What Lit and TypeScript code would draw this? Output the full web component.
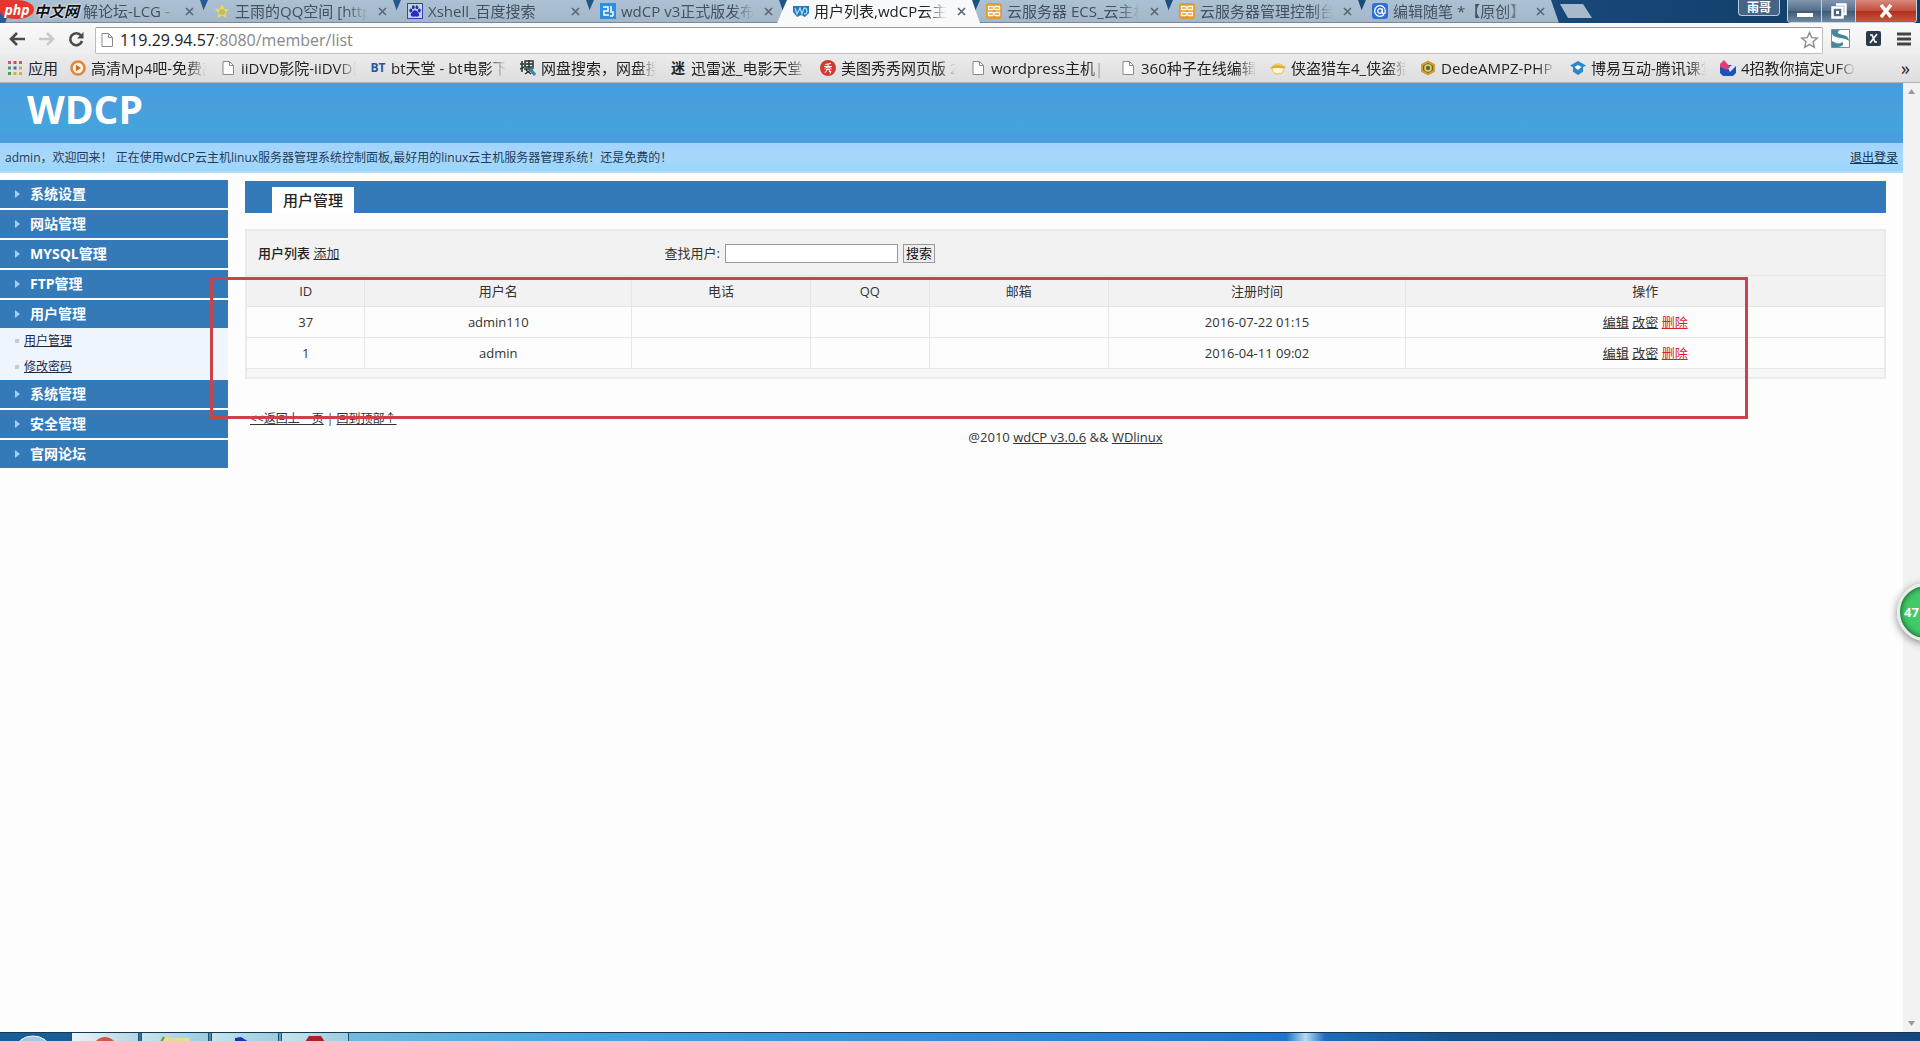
import { LitElement, html, css, svg } from "lit";
import { customElement } from "lit/decorators.js";
import { classMap } from "lit/directives/class-map.js";

const base = css`
  * { box-sizing: border-box; }
  button, input { font-family: inherit; }
  button { border: 0; padding: 0; margin: 0; background: none; color: inherit; }
  svg { display: block; flex: none; }
  ul { list-style: none; margin: 0; padding: 0; }
`;

const sheet = svg`<path d="M3 1.500h6.500l4 4v9h-10.500z" fill="#fdfdfd" stroke="#8a8a8a"/><path d="M9.500 1.500v4h4" fill="none" stroke="#8a8a8a"/>`;

const icons: Record<string, unknown> = {
  sheet,
  star: svg`<path d="M8 1l2.200 4.700 5 .6-3.700 3.500 1 5.200L8 12.400 3.500 15l1-5.200L.8 6.300l5-.6z" fill="#f0d45c"/><circle cx="8" cy="9" r="3" fill="#b8c070"/>`,
  paw: svg`<rect x=".5" y=".5" width="15" height="15" fill="#c3d3ea" stroke="#3343b0"/><ellipse cx="3.800" cy="7.500" rx="1.500" ry="2" fill="#2a2fb8"/><ellipse cx="6.300" cy="4.300" rx="1.400" ry="2" fill="#2a2fb8"/><ellipse cx="9.900" cy="4.300" rx="1.400" ry="2" fill="#2a2fb8"/><ellipse cx="12.300" cy="7.500" rx="1.500" ry="2" fill="#2a2fb8"/><path d="M8 7.300c2 0 4.200 3 4.200 4.700 0 2.200-2.700 1.600-4.200 1.600s-4.200.6-4.200-1.600C3.800 10.300 6 7.300 8 7.300z" fill="#2a2fb8"/>`,
  blog: svg`<rect width="16" height="16" fill="#2d8fe0"/><path d="M3 4h5v4H4v4h5M11 3v7M13 8v5M10 13h3" fill="none" stroke="#fff" stroke-width="1.500"/>`,
  wd: svg`<path d="M0 3h16v7l-4 4-4-2-4 2-4-5z" fill="#2379bd"/><path d="M2 5l2 6 3-6 2 6 2-6M11 5c4 0 4 6 0 6" fill="none" stroke="#9fd8f4" stroke-width="1.300"/>`,
  cloud: svg`<rect width="16" height="16" rx="3" fill="#e8992e"/><path d="M2.500 3.500h4l1.500 1 1.500-1h4v3h-4l-1.500-1-1.500 1h-4zM2.500 9.500h4l1.500 1 1.500-1h4v3h-4l-1.500-1-1.500 1h-4z" fill="none" stroke="#fff" stroke-width="1.300"/>`,
  pen: svg`<rect width="16" height="16" rx="3" fill="#2f6fd6"/><path d="M12 11.500A5.300 5.300 0 1 1 13.300 8v1.500c0 1.500-3 1.500-3 0V5.500" fill="none" stroke="#fff" stroke-width="1.300"/><circle cx="8" cy="8" r="2.300" fill="none" stroke="#fff" stroke-width="1.300"/>`,
  play: svg`<circle cx="8" cy="8" r="6.500" fill="#fdf1e2" stroke="#e0883a" stroke-width="2.600"/><path d="M6 4.800l5 3.200-5 3.200z" fill="#c86a20"/>`,
  orbit: svg`<path d="M2 1v11M0 4h4M0 9l4-2" fill="none" stroke="#25343a" stroke-width="1.500"/><rect x="5" y="1" width="8" height="6" fill="none" stroke="#25343a" stroke-width="1.500"/><path d="M9 0v8M5 4h8M4 9h8l-7 5M6 10l5 4" fill="none" stroke="#25343a" stroke-width="1.500"/><path d="M10 9l5 6" stroke="#2b8ba5" stroke-width="3"/>`,
  xiu: svg`<circle cx="8" cy="8" r="8" fill="#cf3b33"/><path d="M5 4.500l6-1M4 6.500h8M8 4v5M8 6.500L4.500 9M8 6.500L11.500 9M6 9.500h4l-1 2h2l-1 2M7 9.500L5 13" fill="none" stroke="#fff"/>`,
  thief: svg`<ellipse cx="8" cy="9" rx="6" ry="5" fill="#fdf8df" stroke="#e3bd3f"/><path d="M0 8c2-2 5-3 8-3s6 1 8 2c-2 2-4 1-8 1s-6 1-8 0z" fill="#e6ad2c"/>`,
  hex: svg`<path d="M8 .5l7 3.700v7.600l-7 3.700-7-3.700V4.200z" fill="#d39a32"/><path d="M8 3l5 2.700v4.600L8 13l-5-2.700V5.700z" fill="#566b2c"/><circle cx="8" cy="8" r="3" fill="none" stroke="#f4d47a" stroke-width="1.500"/>`,
  cap: svg`<path d="M8 1l8 4.500-3 1.700v4.500L8 15l-5-3.300V7.200L0 5.500z" fill="#2c86cf"/><path d="M4.500 7L8 5l3.500 2L8 10z" fill="#fff"/>`,
  ribbon: svg`<path d="M0 5h16v8l-3 3H3l-3-3z" fill="#1f52b8"/><path d="M8 8l8-6v4l-6 6z" fill="#dfe6f3"/><path d="M0 4l4-4 6 7-3 3-7-3z" fill="#df3f78"/>`,
};

const icon = (name: string) => html`<svg width="16" height="16" viewBox="0 0 16 16" aria-hidden="true">${icons[name]}</svg>`;

@customElement("browser-chrome")
class BrowserChrome extends LitElement {
  static styles = [base, css`
    :host { display: block; font: 15px/22px "Open Sans", "Noto Sans CJK SC", sans-serif; color: #222; }
    .strip { display: flex; align-items: flex-start; height: 23px; background: linear-gradient(90deg, #2a5c92, #17497a 80%, #123c66); position: relative; padding-left: 5px; }
    .tab { display: flex; align-items: center; gap: 5px; flex: 0 1 203px; min-width: 0; height: 23px; margin-right: -10px; padding: 0 14px 1px 16px; background: linear-gradient(#abc1d4, #a3b7c9 94%, #75899b 96%); clip-path: polygon(10px 0, calc(100% - 8px) 0, 100% 100%, 0 100%); color: #42505f; }
    .active { background: #f8f9fa; z-index: 1; color: #222; }
    .name { flex: 1; min-width: 0; overflow: hidden; white-space: nowrap; color: inherit; text-decoration: none; mask-image: linear-gradient(90deg, #000 84%, transparent); }
    .tab .name { margin-right: 5px; }
    .first { padding-left: 78px; }
    .x { width: 9px; height: 9px; color: #5c6873; }
    .new { width: 32px; height: 14px; margin: 4px 0 0 11px; background: #a7bacb; clip-path: polygon(0 0, 23px 0, 100% 100%, 8px 100%); }
    .space { flex: 1; }
    .user { height: 16px; padding: 0 8px; margin-right: 7px; border: 1px solid #b9cadb; border-top: 0; border-radius: 0 0 4px 4px; background: #466485; color: #fff; font-size: 12px; font-weight: 700; line-height: 15px; }
    .win { display: flex; margin-right: 3px; border: 1px solid #c5d2df; border-top: 0; border-radius: 0 0 4px 4px; overflow: hidden; }
    .win button { display: grid; place-items: center; width: 34px; height: 22px; border-right: 1px solid #c5d2df; background: linear-gradient(#8196ad, #526c89 50%, #3e5975 51%, #718aa3); }
    .win .close { width: 60px; border: 0; background: linear-gradient(#d68a7d, #c44f3e 48%, #b1301e 52%, #ca5546); }
    .mark { position: absolute; left: 0; top: 0; z-index: 2; display: flex; align-items: flex-start; }
    .php { width: 34px; height: 19px; border-radius: 0 50% 50% 45%; background: #e8362d; color: #fff; font: italic 700 14px/19px "Open Sans", sans-serif; text-align: center; }
    .cn { font: italic 700 15px/22px "Noto Sans CJK SC", sans-serif; color: #111; text-shadow: 0 0 2px #fff, 0 0 2px #fff; }
    .tools { display: flex; align-items: center; height: 31px; background: linear-gradient(#fafafa, #eeeeee); padding-right: 9px; }
    .nav { display: flex; gap: 12px; padding: 0 11px 0 8px; }
    .url { flex: 1; display: flex; align-items: center; gap: 5px; height: 27px; border: 1px solid #bcbcbc; border-top-color: #999; border-radius: 2px; background: #fff; padding: 0 3px 0 3px; margin-top: 3px; }
    .addr { flex: 1; font-size: 16px; line-height: 22px; color: #888; }
    .host { color: #222; }
    .ext { display: flex; align-items: center; gap: 16px; margin-left: 8px; }
    .marks { display: flex; align-items: center; height: 29px; background: linear-gradient(#ececec, #dedede); border-bottom: 1px solid #a9b5bf; padding: 0 10px 0 8px; }
    .apps { display: flex; gap: 6px; align-items: center; width: 62px; color: inherit; text-decoration: none; }
    .bm { display: flex; gap: 5px; align-items: center; flex: 0 1 150px; min-width: 0; padding-right: 14px; color: inherit; text-decoration: none; }
    .glyph { width: 16px; text-align: center; font-size: 14px; font-weight: 700; }
    .bt { color: #1f5a9c; font-size: 12px; }
    .more { margin-left: auto; font-size: 18px; }
  `];

  tabs: [string, string][] = [
    ["", "解论坛-LCG -"], ["star", "王雨的QQ空间 [http://"], ["paw", "Xshell_百度搜索"],
    ["blog", "wdCP v3正式版发布"], ["wd", "用户列表,wdCP云主"], ["cloud", "云服务器 ECS_云主机"],
    ["cloud", "云服务器管理控制台"], ["pen", "编辑随笔 *【原创】"],
  ];
  marks: [string, string][] = [
    ["play", "高清Mp4吧-免费高"], ["sheet", "iiDVD影院-iiDVD影"], ["BT", "bt天堂 - bt电影下"],
    ["orbit", "网盘搜索，网盘搜"], ["迷", "迅雷迷_电影天堂"], ["xiu", "美图秀秀网页版 2"],
    ["sheet", "wordpress主机||"], ["sheet", "360种子在线编辑"], ["thief", "侠盗猎车4_侠盗猎"],
    ["hex", "DedeAMPZ-PHP"], ["cap", "博易互动-腾讯课堂"], ["ribbon", "4招教你搞定UFO"],
  ];

  render() {
    return html`
      <div class="strip">
        <div class="mark"><span class="php">php</span><span class="cn">中文网</span></div>
        ${this.tabs.map(([ic, name], i) => html`
          <div class=${classMap({ tab: true, active: i === 4, first: i === 0 })}>
            ${ic ? icon(ic) : ""}
            <a class="name" href="#">${name}</a>
            <button class="x" aria-label="关闭"><svg width="9" height="9" viewBox="0 0 9 9"><path d="M1 1l7 7M8 1L1 8" stroke="currentColor" stroke-width="1.700"/></svg></button>
          </div>`)}
        <button class="new" aria-label="新标签页"></button>
        <span class="space"></span>
        <button class="user">雨哥</button>
        <div class="win">
          <button aria-label="最小化"><svg width="16" height="14" viewBox="0 0 16 14"><path d="M0 9h16v4H0z" fill="#fff"/></svg></button>
          <button aria-label="还原"><svg width="16" height="16" viewBox="0 0 16 16"><path d="M5 1.500h9.500V11H12M1.500 4.500h10v10h-10z" fill="none" stroke="#fff" stroke-width="2.500"/><path d="M5 8h3v3H5z" fill="#fff"/></svg></button>
          <button class="close" aria-label="关闭窗口"><svg width="14" height="14" viewBox="0 0 14 14"><path d="M2 1l10 12M12 1L2 13" stroke="#fff" stroke-width="3.500"/></svg></button>
        </div>
      </div>
      <div class="tools">
        <div class="nav">
          <button aria-label="后退"><svg width="18" height="18" viewBox="0 0 18 18"><path d="M17 9H3M9 3L3 9l6 6" fill="none" stroke="#4c4c4c" stroke-width="2.600"/></svg></button>
          <button aria-label="前进"><svg width="18" height="18" viewBox="0 0 18 18"><path d="M1 9h14M9 3l6 6-6 6" fill="none" stroke="#c9c9c9" stroke-width="2.600"/></svg></button>
          <button aria-label="刷新"><svg width="16" height="18" viewBox="0 0 16 18"><path d="M13 5.500A6 6 0 1 0 14 11" fill="none" stroke="#4c4c4c" stroke-width="2.600"/><path d="M15.500 2v6.500H9z" fill="#4c4c4c"/></svg></button>
        </div>
        <div class="url">
          ${icon("sheet")}
          <div class="addr" role="textbox" aria-label="地址"><span class="host">119.29.94.57</span>:8080/member/list</div>
          <button aria-label="收藏"><svg width="19" height="18" viewBox="0 0 19 18"><path d="M9.500 1.500l2.200 5.100 5.600.5-4.200 3.700 1.200 5.500-4.800-2.900-4.800 2.900 1.200-5.500L1.700 7.100l5.600-.5z" fill="#fff" stroke="#8c8c8c" stroke-width="1.400"/></svg></button>
        </div>
        <div class="ext">
          <svg width="19" height="19" viewBox="0 0 19 19"><path d="M.5.5h18v18H.5z" fill="#fff" stroke="#7590a5"/><path d="M1 1h8c-4 2-2 4 3 5 5 1 6 4 6 6-4-4-17-2-17-8z" fill="#46869c"/><path d="M1 12c4 3 9 3 10 1 3 2 0 5-4 5H1z" fill="#46869c"/></svg>
          <svg width="15" height="15" viewBox="0 0 15 15"><rect width="15" height="15" rx="2" fill="#2b3a4b"/><path d="M4 12l7-9M4 4l2 0 3 7h2" fill="none" stroke="#fff" stroke-width="1.600"/></svg>
          <button aria-label="菜单"><svg width="14" height="14" viewBox="0 0 14 14"><path d="M0 2h14M0 7h14M0 12h14" stroke="#444" stroke-width="2.800"/></svg></button>
        </div>
      </div>
      <div class="marks">
        <a class="apps" href="#"><svg width="14" height="14" viewBox="0 0 14 14">
          <path d="M0 0h3v3H0zM11 0h3v3h-3z" fill="#d0508c"/><path d="M5.500 0h3v3h-3z" fill="#c9572c"/>
          <path d="M0 5.500h3v3H0z" fill="#41a06a"/><path d="M5.500 5.500h3v3h-3z" fill="#3c6fc0"/><path d="M11 5.500h3v3h-3zM5.500 11h3v3h-3zM11 11h3v3h-3z" fill="#dfac32"/><path d="M0 11h3v3H0z" fill="#4e9d55"/></svg>应用</a>
        ${this.marks.map(([ic, name]) => html`<a class="bm" href="#">
          ${icons[ic] ? icon(ic) : html`<span class=${classMap({ glyph: true, bt: ic === "BT" })}>${ic}</span>`}
          <span class="name">${name}</span></a>`)}
        <button class="more" aria-label="更多书签">»</button>
      </div>`;
  }
}

@customElement("side-menu")
class SideMenu extends LitElement {
  static styles = [base, css`
    :host { display: block; flex: none; width: 228px; }
    .head { display: flex; align-items: center; gap: 10px; width: 100%; height: 28px; padding-left: 15px; margin-bottom: 2px; background: #3479b8; color: #fff; font-size: 14px; font-weight: 700; line-height: 20px; }
    .open { margin-bottom: 0; }
    .sub { background: #eff5fd; }
    .sub li { display: flex; align-items: center; gap: 5px; height: 26px; padding-left: 15px; font-size: 12px; }
    .sub li::before { content: ""; width: 4px; height: 4px; background: #c3ccd6; }
    .sub a { color: #1f2a3c; }
  `];
  groups: { name: string; items?: string[] }[] = [
    { name: "系统设置" }, { name: "网站管理" }, { name: "MYSQL管理" }, { name: "FTP管理" },
    { name: "用户管理", items: ["用户管理", "修改密码"] },
    { name: "系统管理" }, { name: "安全管理" }, { name: "官网论坛" },
  ];
  render() {
    return html`<nav>${this.groups.map(g => html`
      <button class=${classMap({ head: true, open: !!g.items })}>
        <svg width="5" height="8" viewBox="0 0 5 8"><path d="M0 0l5 4-5 4z" fill="#9fd0f5"/></svg>${g.name}</button>
      ${g.items ? html`<ul class="sub">${g.items.map(s => html`<li><a href="#">${s}</a></li>`)}</ul>` : ""}`)}</nav>`;
  }
}

@customElement("user-list")
class UserList extends LitElement {
  static styles = [base, css`
    :host { display: block; flex: 1; min-width: 0; position: relative; font-size: 13px; line-height: 20px; color: #333; }
    a { color: inherit; }
    .bar { display: flex; align-items: flex-end; height: 32px; padding-left: 27px; background: #3479b8; margin-bottom: 16px; }
    .bar h1 { margin: 0; height: 26px; padding: 0 11px; background: #fff; font-size: 15px; line-height: 26px; font-weight: 500; color: #222; }
    .box { border: 2px solid #ebebeb; background: #f7f7f7; }
    .find { display: grid; grid-template-columns: 25% 1fr; align-items: center; height: 44px; padding-left: 11px; background: #f2f2f2; }
    .title { font-weight: 500; color: #222; }
    form { display: flex; align-items: center; gap: 5px; }
    input { width: 173px; height: 19px; border: 1px solid #999; background: #fff; }
    form button { height: 19px; padding: 0 2px; border: 1px solid #999; background: #eee; color: #111; font-size: 13px; line-height: 17px; }
    table { width: 100%; table-layout: fixed; border-collapse: collapse; background: #fdfdfd; }
    th, td { height: 31px; padding: 0; border: solid #e6e6e6; border-width: 1px 0 1px 1px; font-weight: 400; text-align: center; }
    th { background: #f2f2f2; }
    th:first-child, td:first-child { border-left: 0; }
    .c1 { width: 7.2%; } .c2 { width: 16.3%; } .c3 { width: 10.9%; } .c4 { width: 7.3%; } .c5 { width: 10.9%; } .c6 { width: 18.2%; }
    .del { color: #d8232f; }
    .end { height: 8px; }
    .back { margin: 30px 0 0 5px; font-size: 12px; line-height: 20px; }
    footer { text-align: center; font-size: 13px; line-height: 16px; }
    .frame { position: absolute; left: -35px; right: 138px; top: 96px; height: 142px; border: 3px solid #c8444a; pointer-events: none; }
  `];
  cols = ["ID", "用户名", "电话", "QQ", "邮箱", "注册时间", "操作"];
  rows = [["37", "admin110", "", "", "", "2016-07-22 01:15"], ["1", "admin", "", "", "", "2016-04-11 09:02"]];
  render() {
    return html`
      <div class="bar"><h1>用户管理</h1></div>
      <div class="box">
        <div class="find">
          <div><span class="title">用户列表</span> <a href="#">添加</a></div>
          <form @submit=${(e: Event) => e.preventDefault()}>
            <label for="q">查找用户:</label><input id="q" type="text"><button>搜索</button>
          </form>
        </div>
        <table>
          <thead><tr>${this.cols.map((c, i) => html`<th class="c${i + 1}" scope="col">${c}</th>`)}</tr></thead>
          <tbody>${this.rows.map(r => html`<tr>${r.map(c => html`<td>${c}</td>`)}
            <td><a href="#">编辑</a> <a href="#">改密</a> <a class="del" href="#">删除</a></td></tr>`)}</tbody>
        </table>
        <div class="end"></div>
      </div>
      <div class="back"><a href="#">&lt;&lt;返回上一页</a> | <a href="#">回到顶部↑</a></div>
      <footer>@2010 <a href="#">wdCP v3.0.6</a> &amp;&amp; <a href="#">WDlinux</a></footer>
      <div class="frame"></div>`;
  }
}

@customElement("app-root")
class AppRoot extends LitElement {
  static styles = [base, css`
    :host { display: flex; flex-direction: column; min-height: 100vh; overflow: hidden; position: relative; background: #fdfdfd; font: 12px/18px "Open Sans", "Noto Sans CJK SC", sans-serif; color: #222; }
    .view { flex: 1; display: flex; }
    .page { flex: 1; min-width: 0; }
    .brand { display: flex; align-items: center; height: 60px; padding: 0 27px 8px; background: linear-gradient(#429fe4, #4a9edb 40%, #43a4de 70%, #4a9bdb); color: #fff; font-size: 39px; line-height: 52px; font-weight: 700; }
    .hello { display: flex; justify-content: space-between; align-items: center; height: 30px; padding: 2px 5px 0; background: linear-gradient(#a0d4fd, #a8d7fa 50%, #98d5fc); border-bottom: 2px solid #b5dcf2; color: #1f3c5a; }
    .hello a { color: #16334f; }
    .body { display: flex; align-items: flex-start; gap: 17px; padding: 7px 17px 0 0; }
    user-list { margin-top: 1px; }
    .scroll { display: flex; flex-direction: column; justify-content: space-between; align-items: center; width: 17px; padding: 6px 0; background: #f2f2f2; }
    .task { display: flex; height: 9px; border-top: 1px solid #17364f; padding-left: 71px; background: linear-gradient(90deg, #195e99 0, #195e99 4%, #72b9dc 18%, #47a5df 30%, #2b80d2 60%, #1f74cc 67%, #b6dcf2 68%, #1d6cbd 69%, #15518a 76%, #184680 100%); overflow: hidden; position: relative; }
    .task button { display: flex; justify-content: center; width: 68px; height: 9px; margin-right: 2px; border: 1px solid #27506b; border-top: 0; background: linear-gradient(90deg, #eaf5f8, #b4d4e2); }
    .task button:nth-of-type(n+2) { background: linear-gradient(90deg, #c6e5ec, #9accdf); }
    .orb { position: absolute; left: 16px; top: 2px; }
    .ball { position: absolute; right: -35px; top: 583px; width: 58px; height: 58px; border: 3px solid #e6efe8; border-radius: 50%; background: radial-gradient(circle, #42c968 50%, #39bd5c 60%, #27884a 70%); box-shadow: 0 2px 8px #0007; color: #fff; font-size: 13px; font-weight: 700; text-align: left; padding-left: 4px; }
  `];
  render() {
    return html`
      <browser-chrome></browser-chrome>
      <div class="view">
        <div class="page">
          <div class="brand">WDCP</div>
          <div class="hello"><span>admin，欢迎回来！ 正在使用wdCP云主机linux服务器管理系统控制面板,最好用的linux云主机服务器管理系统！还是免费的！</span><a href="#">退出登录</a></div>
          <div class="body"><side-menu></side-menu><user-list></user-list></div>
        </div>
        <div class="scroll">
          <svg width="7" height="5" viewBox="0 0 7 5"><path d="M0 5l3.500-5L7 5z" fill="#999"/></svg>
          <svg width="7" height="5" viewBox="0 0 7 5"><path d="M0 0l3.500 5L7 0z" fill="#999"/></svg>
        </div>
      </div>
      <div class="task">
        <svg class="orb" width="34" height="8" viewBox="0 0 34 8"><ellipse cx="17" cy="14" rx="17" ry="13" fill="#a9c8e0" stroke="#eef6fb"/></svg>
        <button aria-label="Chrome"><svg width="24" height="9" viewBox="0 0 24 9"><circle cx="12" cy="16" r="12" fill="#d3564a"/></svg></button>
        <button aria-label="资源管理器"><svg width="34" height="9" viewBox="0 0 34 9"><path d="M2 9l3-5 4-1 3 2h20v4z" fill="#e6dd8e"/><path d="M3 9l3-5" stroke="#5a9a4a" stroke-width="2"/></svg></button>
        <button aria-label="Xshell"><svg width="24" height="9" viewBox="0 0 24 9"><path d="M2 5l6-1 8 5H2z" fill="#1c35b8"/></svg></button>
        <button aria-label="录制"><svg width="24" height="9" viewBox="0 0 24 9"><path d="M2 9l4-6h12l4 6z" fill="#a8222e"/></svg></button>
      </div>
      <button class="ball">47</button>`;
  }
}
